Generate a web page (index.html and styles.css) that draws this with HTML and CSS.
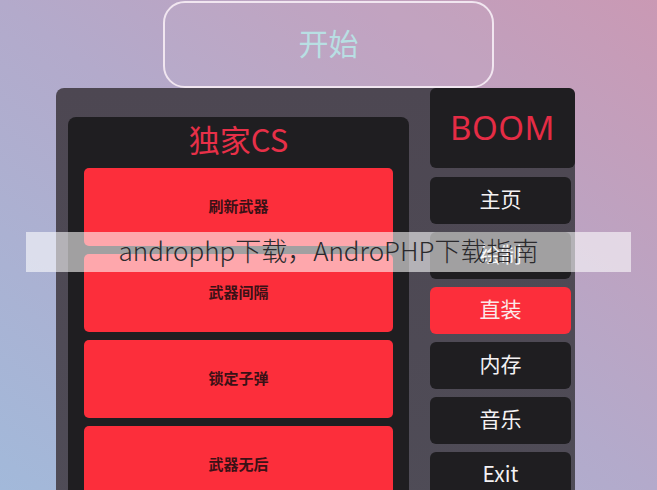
FILE: index.html
```html
<!DOCTYPE html>
<html lang="zh-CN">
<head>
<meta charset="utf-8">
<title>androphp下载</title>
<link rel="stylesheet" href="styles.css">
</head>
<body>
  <div class="screen">
    <button class="start">开始</button>

    <div class="panel">
      <section class="main">
        <h1 class="main-title">独家CS</h1>
        <div class="actions">
          <div class="action">刷新武器</div>
          <div class="action">武器间隔</div>
          <div class="action">锁定子弹</div>
          <div class="action">武器无后</div>
        </div>
      </section>

      <nav class="side">
        <div class="brand">BOOM</div>
        <div class="tab">主页</div>
        <div class="tab">绘制</div>
        <div class="tab tab-active">直装</div>
        <div class="tab">内存</div>
        <div class="tab">音乐</div>
        <div class="tab">Exit</div>
      </nav>
    </div>

    <div class="banner">androphp下载，AndroPHP下载指南</div>
  </div>
</body>
</html>
```

FILE: styles.css
```css
* {
  box-sizing: border-box;
}

html,
body {
  margin: 0;
  padding: 0;
}

body {
  width: 657px;
  height: 490px;
  overflow: hidden;
  font-family: "Noto Sans CJK SC", "Noto Sans", sans-serif;
}

.screen {
  position: relative;
  width: 657px;
  height: 490px;
  overflow: hidden;
  display: flex;
  flex-direction: column;
  background: linear-gradient(to top right, #a2b9da 0%, #b3aacb 50%, #ca99b4 100%);
}

/* top start button: outline only */
.start {
  margin: 1px 0 0 163px;
  width: 331px;
  height: 87px;
  flex: none;
  border: 2px solid #f1e6f0;
  border-radius: 22px;
  background: rgba(255, 255, 255, 0.03);
  color: #b8dfe3;
  font-family: inherit;
  font-size: 30px;
  padding: 0 0 6px;
}

/* dark menu window */
.panel {
  margin-left: 56px;
  width: 519px;
  flex: none;
  height: 430px;
  border-radius: 8px;
  background: linear-gradient(to bottom, #4d4752, #4f4c57);
  display: flex;
  align-items: flex-start;
  gap: 21px;
  padding-left: 12px;
}

.main {
  margin-top: 29px;
  width: 341px;
  height: 420px;
  border-radius: 8px;
  background: #1f1e21;
  padding: 0 16px;
}

.main-title {
  margin: 0;
  height: 51px;
  line-height: 43px;
  text-align: center;
  font-size: 31px;
  font-weight: 400;
  color: #e73048;
}

.actions {
  display: flex;
  flex-direction: column;
  gap: 8px;
}

.action {
  height: 78px;
  border-radius: 5px;
  background: #fc2e3b;
  color: #3b1116;
  font-size: 15px;
  font-weight: 700;
  display: flex;
  align-items: center;
  justify-content: center;
  padding-bottom: 4px;
}

.side {
  width: 145px;
  display: flex;
  flex-direction: column;
  gap: 8px;
}

.brand {
  height: 80px;
  margin-bottom: 1px;
  border-radius: 6px;
  background: #1f1e21;
  color: #e52c45;
  font-family: "Noto Sans", sans-serif;
  font-size: 33px;
  letter-spacing: 0.5px;
  display: flex;
  align-items: center;
  justify-content: center;
  padding-bottom: 2px;
}

.tab {
  width: 141px;
  height: 47px;
  border-radius: 6px;
  background: #1f1e21;
  color: #f4f2f4;
  font-size: 21px;
  display: flex;
  align-items: center;
  justify-content: center;
  padding-bottom: 5px;
}

.tab-active {
  background: #fc2e3b;
  color: #fbe9ea;
}

/* caption strip laid over the screen */
.banner {
  position: absolute;
  left: 26px;
  top: 232px;
  width: 605px;
  height: 40px;
  background: rgba(255, 255, 255, 0.58);
  color: #2b2a2d;
  font-size: 26px;
  font-weight: 300;
  line-height: 36px;
  text-align: center;
  white-space: nowrap;
}
```
